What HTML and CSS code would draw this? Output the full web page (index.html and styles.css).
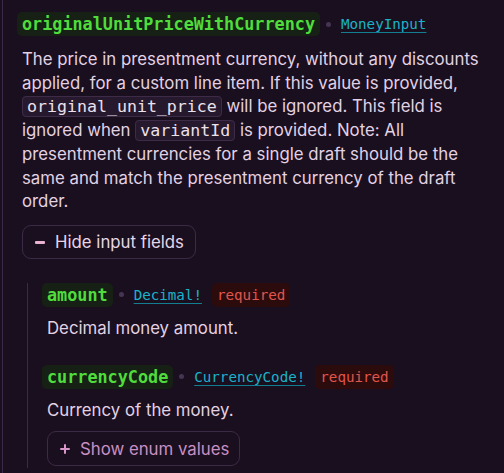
FILE: index.html
```
<!DOCTYPE html>
<html>
<head>
<meta charset="utf-8">
<link rel="stylesheet" href="styles.css">
</head>
<body>
<div class="page">
  <div class="field">
    <div class="field-head">
      <code class="name">originalUnitPriceWithCurrency</code>
      <span class="dot"></span>
      <a class="type" href="#">MoneyInput</a>
    </div>
    <p class="desc">The price in presentment currency, without any discounts applied, for a custom line item. If this value is provided, <code class="inline">original_unit_price</code> will be ignored. This field is ignored when <code class="inline">variantId</code> is provided. Note: All presentment currencies for a single draft should be the same and match the presentment currency of the draft order.</p>
    <button class="toggle"><span class="icon minus"></span>Hide input fields</button>
    <div class="nested">
      <div class="sub">
        <div class="field-head">
          <code class="name small">amount</code>
          <span class="dot"></span>
          <a class="type" href="#">Decimal!</a>
          <span class="req">required</span>
        </div>
        <p class="desc">Decimal money amount.</p>
      </div>
      <div class="sub">
        <div class="field-head">
          <code class="name small">currencyCode</code>
          <span class="dot"></span>
          <a class="type" href="#">CurrencyCode!</a>
          <span class="req">required</span>
        </div>
        <p class="desc">Currency of the money.</p>
        <button class="toggle enum"><span class="icon plus"></span>Show enum values</button>
      </div>
    </div>
  </div>
</div>
</body>
</html>
```
FILE: styles.css
```
html, body {
  margin: 0;
  padding: 0;
  background: #1a0f1f;
}
body {
  font-family: Inter, "Noto Sans", sans-serif;
  color: #e3d2e3;
  width: 504px;
  height: 473px;
  overflow: hidden;
}
.page {
  border-left: 1px solid #3d2a4a;
  margin-left: 2px;
  min-height: 473px;
  box-sizing: border-box;
  padding: 12px 0 0 19px;
}
.field-head {
  display: flex;
  align-items: center;
}
.name {
  font-family: "DejaVu Sans Mono", monospace;
  font-weight: bold;
  font-size: 16.8px;
  color: #4fdc3c;
  background: #162014;
  border-radius: 5px;
  padding: 0 5px;
  height: 24px;
  line-height: 24px;
  margin-left: -5px;
}
.dot {
  width: 5px;
  height: 5px;
  border-radius: 50%;
  background: #463453;
  margin: 0 10px 0 6px;
}
.type {
  font-family: "DejaVu Sans Mono", monospace;
  font-size: 14.2px;
  color: #19b3c9;
  text-decoration: underline;
  text-decoration-color: #137e90;
  text-underline-offset: 3px;
}
.req {
  font-family: "DejaVu Sans Mono", monospace;
  font-size: 14.2px;
  color: #e0564d;
  background: #2c0b0d;
  border-radius: 5px;
  padding: 0 5px;
  height: 24px;
  line-height: 24px;
  margin-left: 10px;
}
.desc {
  margin: 12px 0 0 0;
  font-size: 16.8px;
  line-height: 23.7px;
}
.inline {
  font-family: "DejaVu Sans Mono", monospace;
  font-size: 16.6px;
  background: #26192d;
  border: 1px solid #3d2b47;
  border-radius: 4px;
  padding: 0 4px;
  color: #ece0ec;
}
.toggle {
  display: flex;
  align-items: center;
  margin-top: 11px;
  height: 34px;
  padding: 0 11px 0 12px;
  background: transparent;
  border: 1px solid #3b2a46;
  border-radius: 9px;
  font-family: Inter, "Noto Sans", sans-serif;
  font-size: 16.8px;
  color: #e6d6e6;
  gap: 10px;
}
.icon {
  position: relative;
  width: 10px;
  height: 10px;
}
.minus::before, .plus::before, .plus::after {
  content: "";
  position: absolute;
  background: #e8b2d0;
  border-radius: 1px;
}
.minus::before, .plus::before {
  left: 0;
  top: 4px;
  width: 10px;
  height: 2.6px;
}
.plus::after {
  left: 3.7px;
  top: 0;
  width: 2.6px;
  height: 10px;
}
.nested {
  margin: 24px 0 0 5px;
  border-left: 1px solid #3b2a46;
  padding-left: 19px;
  padding-bottom: 2px;
}
.sub + .sub {
  margin-top: 24px;
}
.sub .desc {
  margin-top: 10px;
}
.enum {
  margin-top: 9px;
  height: 35px;
  padding: 0 10px 0 12px;
  color: #c98fc2;
}
.enum .plus::before, .enum .plus::after {
  background: #d996c8;
}
```
